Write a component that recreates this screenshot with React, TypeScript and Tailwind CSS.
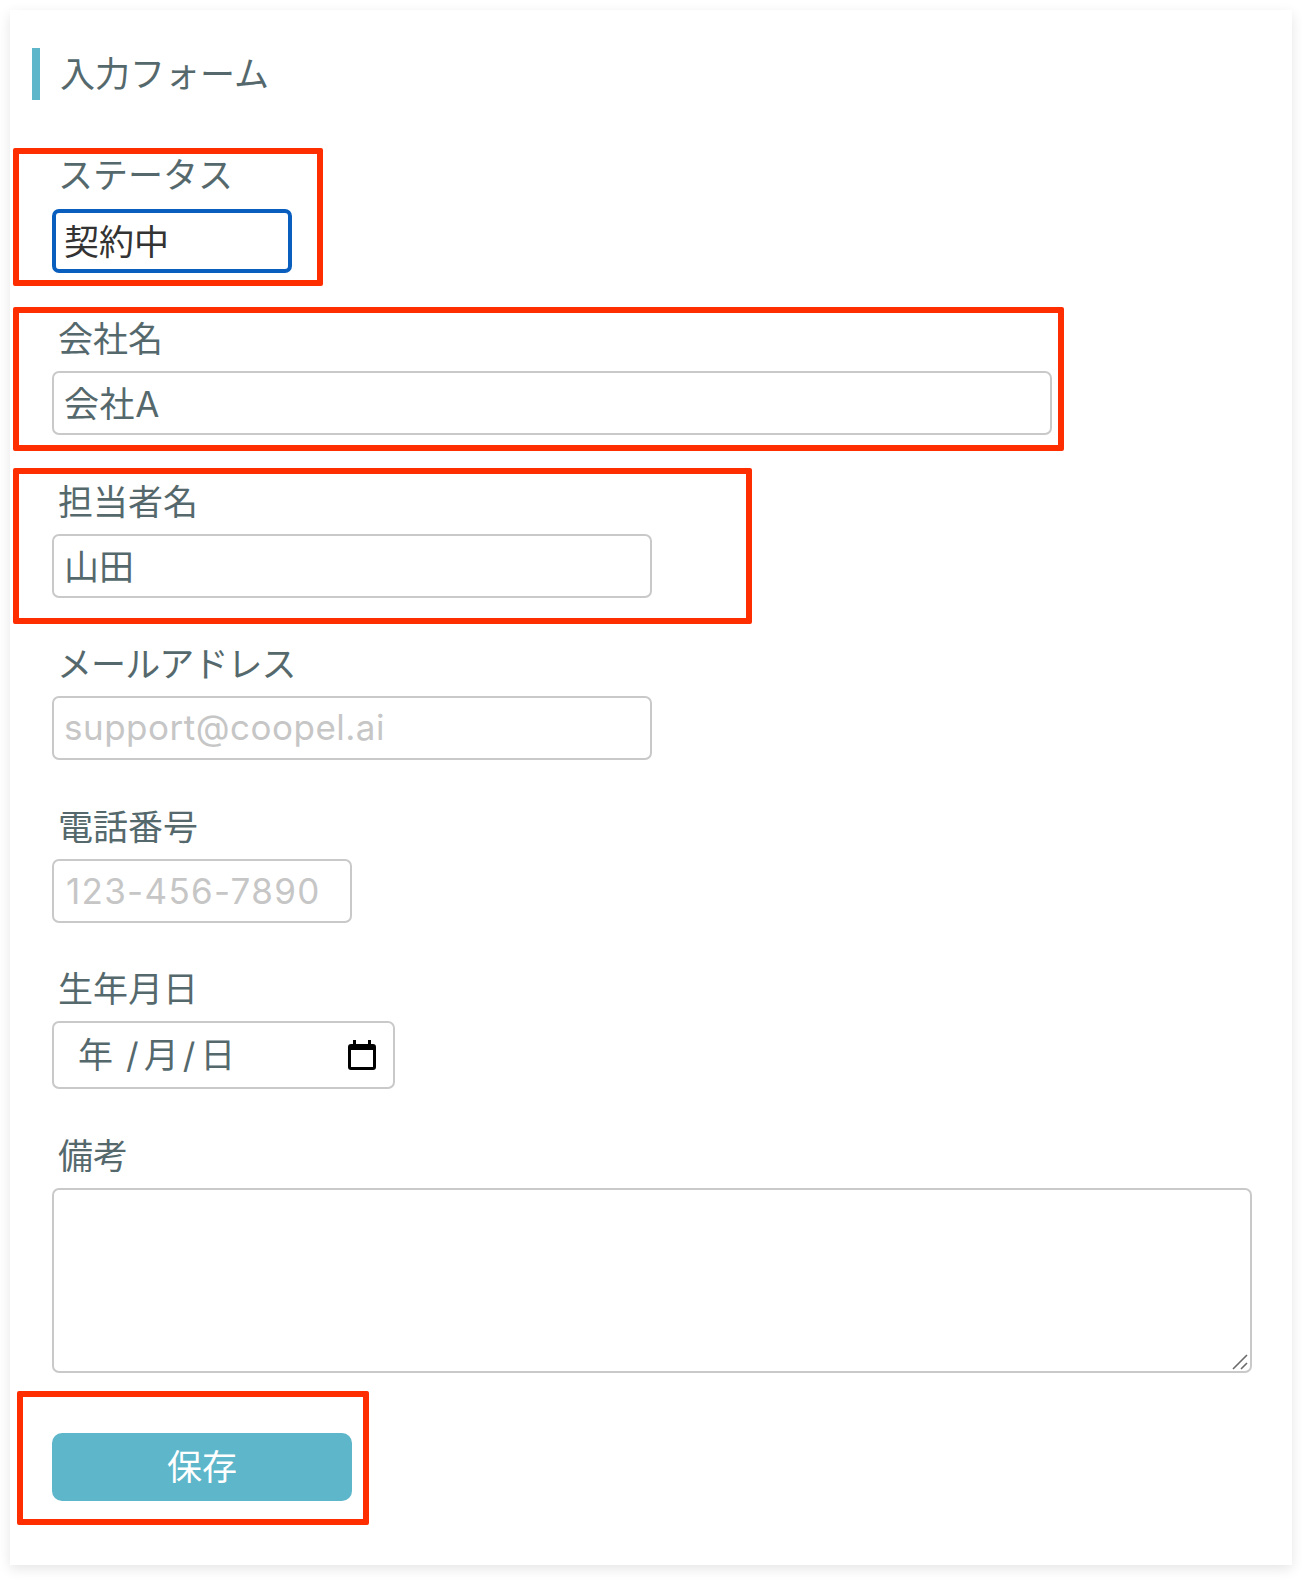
import React from "react";

const labelCls = "block h-[50px] mb-[7px] pl-[6px] text-[35px] leading-[50px] text-[#55696d]";
const inputCls = "block h-[64px] box-border rounded-[7px] border-2 border-[#c9c9c9] bg-white pl-[10px] pr-[10px] pb-[3px] text-[35px] text-[#55696d] outline-none placeholder:text-[#c6c6c6]";

function Box({ cls }: { cls: string }) {
  return <div className={"absolute pointer-events-none rounded-[2px] border-[6px] border-[#ff2e00] " + cls} />;
}

export default function App() {
  return (
    <div className="w-[1302px] h-[1581px] bg-white pl-[10px] pt-[10px] overflow-hidden font-['Inter','Noto_Sans_CJK_JP',sans-serif]">
      <div className="relative w-[1282px] h-[1555px] bg-white pl-[22px] pr-[40px] pt-[38px] shadow-[0_4px_12px_rgba(0,0,0,0.10)]">
        <div className="flex items-center h-[52px] border-l-[8px] border-[#5db6c9] pl-[20px] text-[35px] text-[#55696d]">
          入力フォーム
        </div>

        <div className="pl-[20px]">
          <div className="mt-[52px] flex flex-col gap-[41.4px]">
            <div>
              <label className={labelCls + " -translate-y-[2px]"}>ステータス</label>
              <input readOnly value="契約中" className={inputCls + " w-[240px] !pl-[8px] !border-[4px] !border-[#0a5fbe] !text-[#333333]"} />
            </div>
            <div>
              <label className={labelCls}>会社名</label>
              <input readOnly value="会社A" className={inputCls + " w-[1000px] tracking-[0.6px]"} />
            </div>
            <div>
              <label className={labelCls}>担当者名</label>
              <input readOnly value="山田" className={inputCls + " w-[600px]"} />
            </div>
            <div>
              <label className={labelCls + " tracking-[-0.9px] !pl-[5px]"}>メールアドレス</label>
              <input readOnly placeholder="support@coopel.ai" className={inputCls + " w-[600px] tracking-[0.5px]"} />
            </div>
            <div>
              <label className={labelCls}>電話番号</label>
              <input readOnly placeholder="123-456-7890" className={inputCls + " w-[300px] tracking-[1.3px] !pl-[12px] !pb-0"} />
            </div>
            <div>
              <label className={labelCls}>生年月日</label>
              <div className={inputCls + " w-[343px] !h-[68px] !pb-0 flex items-center justify-between !pl-[24px] !pr-[16px]"}>
                <span className="flex">
                  <span>年</span>
                  <span className="ml-[13px]">/</span>
                  <span className="ml-[5px]">月</span>
                  <span className="ml-[4px]">/</span>
                  <span className="ml-[5px]">日</span>
                </span>
                <svg width="30" height="32" viewBox="0 0 30 32" aria-hidden="true">
                  <path d="M6 1h3v4h12V1h3v4h2a3 3 0 0 1 3 3v20a3 3 0 0 1-3 3H4a3 3 0 0 1-3-3V8a3 3 0 0 1 3-3h2z" fill="#000" />
                  <rect x="4" y="11" width="22" height="17" fill="#fff" />
                </svg>
              </div>
            </div>
            <div className="mt-[1px]">
              <label className={labelCls}>備考</label>
              <div className="relative w-[1200px]">
                <textarea readOnly className={inputCls + " !h-[185px] w-full resize-none"} />
                <svg className="absolute right-[3px] bottom-[2px]" width="18" height="18" viewBox="0 0 18 18" aria-hidden="true">
                  <path d="M2 16L16 2M10 16L16 10" stroke="#6b6b6b" strokeWidth="1.6" fill="none" />
                </svg>
              </div>
            </div>
          </div>

          <button className="mt-[60px] block w-[300px] h-[68px] rounded-[10px] bg-[#5db6c9] text-[35px] text-white">
            保存
          </button>
        </div>

        <Box cls="left-[3px] top-[138px] w-[310px] h-[138px]" />
        <Box cls="left-[3px] top-[297px] w-[1051px] h-[144px]" />
        <Box cls="left-[3px] top-[458px] w-[739px] h-[156px]" />
        <Box cls="left-[7px] top-[1381px] w-[352px] h-[134px]" />
      </div>
    </div>
  );
}
